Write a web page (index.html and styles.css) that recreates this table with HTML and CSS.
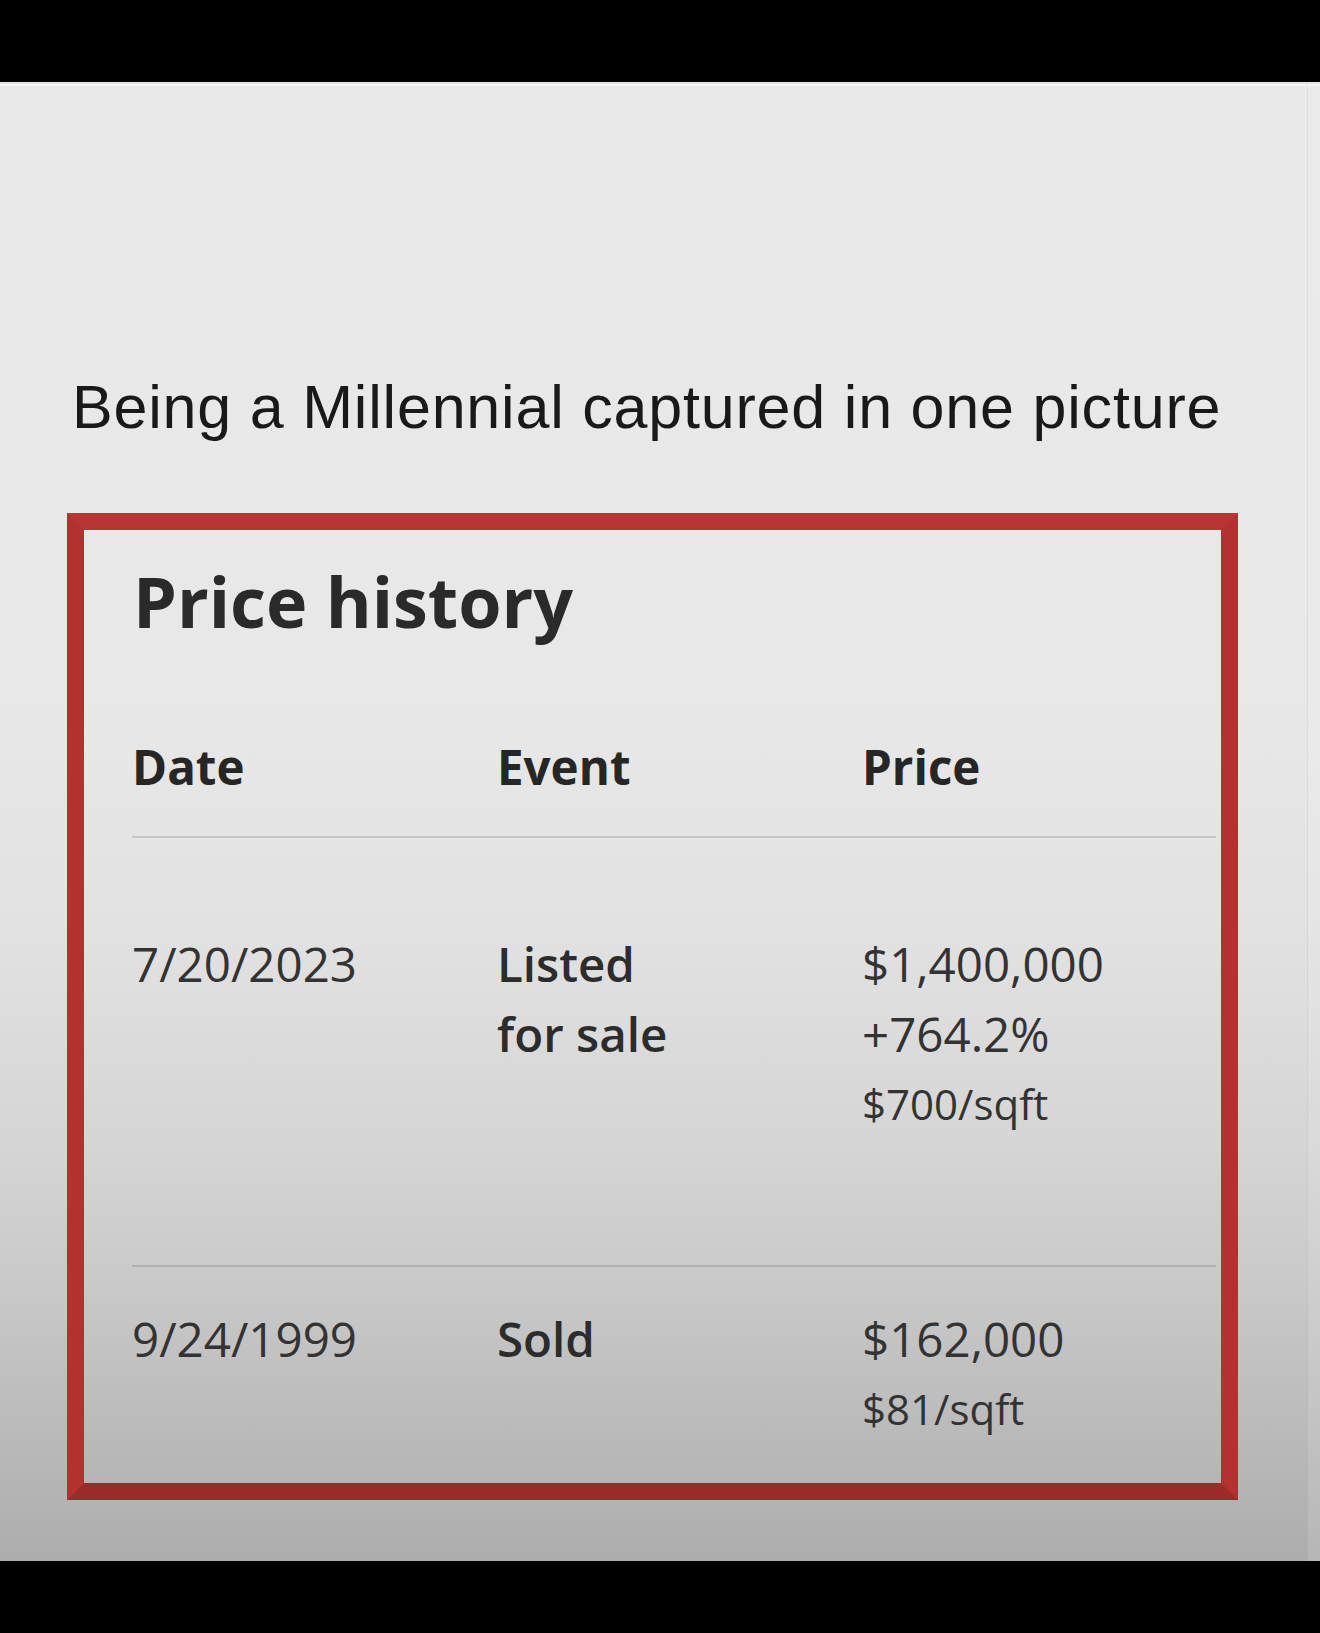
FILE: index.html
```html
<!DOCTYPE html>
<html lang="en">
<head>
<meta charset="utf-8">
<title>Price history</title>
<link rel="stylesheet" href="styles.css">
</head>
<body>
<div class="frame">
  <div class="bar"></div>
  <div class="screen">
    <main class="content">
      <p class="caption">Being a Millennial captured in one picture</p>
      <section class="card">
        <h2 class="card-title">Price history</h2>
        <div class="table">
          <div class="row head">
            <div class="cell">Date</div>
            <div class="cell">Event</div>
            <div class="cell">Price</div>
          </div>
          <div class="row first">
            <div class="cell date">7/20/2023</div>
            <div class="cell event">Listed<br>for sale</div>
            <div class="cell price">$1,400,000<br>+764.2%<span class="sub">$700/sqft</span></div>
          </div>
          <div class="row second">
            <div class="cell date">9/24/1999</div>
            <div class="cell event">Sold</div>
            <div class="cell price">$162,000<span class="sub">$81/sqft</span></div>
          </div>
        </div>
      </section>
    </main>
    <aside class="edge"></aside>
  </div>
  <div class="bar bottom"></div>
</div>
</body>
</html>
```

FILE: styles.css
```css
html, body {
  margin: 0;
  padding: 0;
  background: #000;
}

.frame {
  width: 1320px;
  height: 1633px;
  display: flex;
  flex-direction: column;
  overflow: hidden;
}

.bar {
  height: 82px;
  background: #000;
  flex: none;
}

.bar.bottom {
  height: 72px;
}

.screen {
  height: 1479px;
  flex: none;
  display: flex;
  background:
    linear-gradient(to bottom, #e4e4e4 0 2px, #f5f5f5 2px 4px, rgba(0,0,0,0) 4px),
    linear-gradient(to bottom, #e9e9e9 0%, #e8e8e8 42%, #e2e2e2 57%, #d5d5d5 72%, #c8c8c8 82%, #bcbcbc 90%, #adadad 100%);
}

.content {
  flex: 1;
  padding: 290px 0 0 67px;
}

.edge {
  width: 12px;
  flex: none;
  border-left: 1px solid rgba(0, 0, 0, 0.05);
  background: rgba(255, 255, 255, 0.12);
}

.caption {
  margin: 0 0 71px 5px;
  font-family: "Liberation Sans", Arial, sans-serif;
  font-size: 61px;
  letter-spacing: 0.8px;
  line-height: 70px;
  color: #191919;
}

.card {
  box-sizing: border-box;
  width: 1171px;
  height: 987px;
  border: 17px solid #b3322f;
  border-top-color: #b53632;
  border-bottom-color: #992b29;
  padding: 31px 5px 0 48px;
  font-family: "Open Sans", "Noto Sans", sans-serif;
  color: #2e2e2e;
}

.card-title {
  margin: 0 0 91px 1px;
  font-size: 70px;
  line-height: 80px;
  font-weight: 700;
  color: #2a2a2a;
}

.row {
  display: grid;
  grid-template-columns: 365px 365px 1fr;
  font-size: 47.5px;
  line-height: 70px;
}

.head {
  font-weight: 700;
  color: #262626;
  padding-bottom: 34px;
  border-bottom: 2px solid rgba(0, 0, 0, 0.13);
}

.first {
  padding: 91px 0 127px;
  border-bottom: 2px solid rgba(0, 0, 0, 0.13);
}

.second {
  padding-top: 37px;
}

.event {
  font-weight: 600;
  color: #2c2c2c;
}

.date, .price {
  color: #333;
}

.sub {
  display: block;
  font-size: 42px;
  line-height: 69px;
}
```
